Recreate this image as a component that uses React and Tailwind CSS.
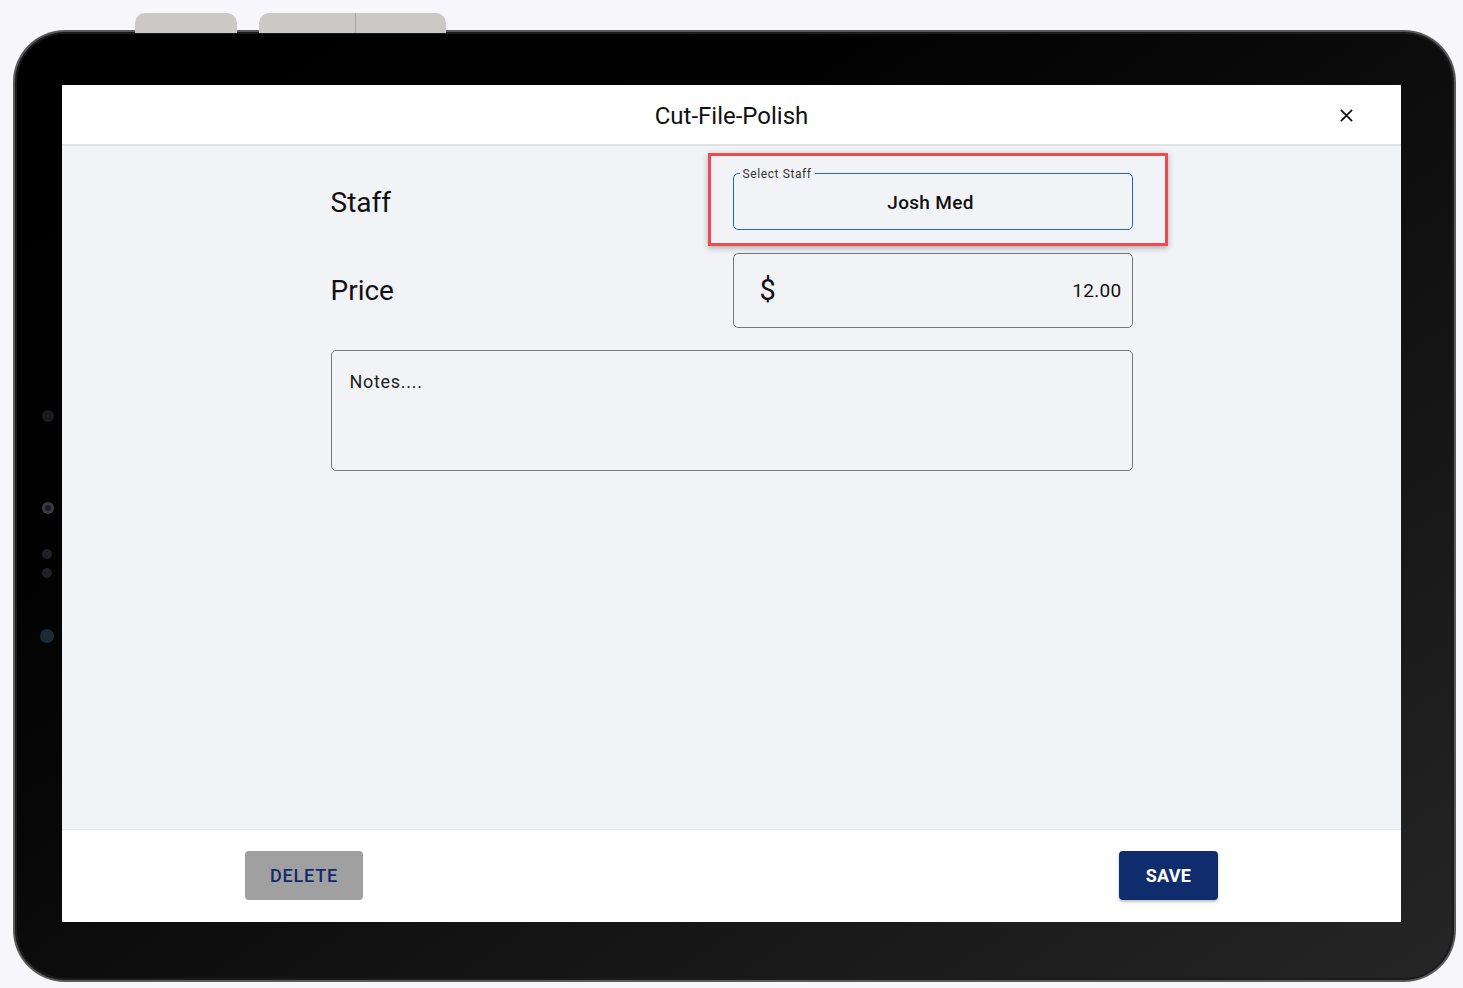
function TabletFrame({ children }) {
  return (
    <div className="relative ml-[13px] mt-[30px] h-[952px] w-[1443px]">
      {/* top hardware buttons */}
      <div className="absolute left-[122px] top-[-17px] h-[20px] w-[102px] rounded-t-[10px] bg-[#cbc9c6]" />
      <div className="absolute left-[246px] top-[-17px] flex h-[20px] w-[187px] overflow-hidden rounded-t-[10px] bg-[#cbc9c6]">
        <div className="h-full w-[97px] border-r border-[#a9a7a4]" />
      </div>
      <div className="h-full w-full rounded-[52px] bg-[#5a5a5a] p-[2px]">
        <div className="h-full w-full rounded-[50px] bg-[#1b1b1b] p-[2px]">
          <div className="relative flex h-full w-full rounded-[48px] bg-gradient-to-br from-[#000000] via-[#0c0c0c] to-[#262626] pb-[56px] pl-[45px] pr-[51px] pt-[51px]">
            {/* side sensors */}
            <div className="absolute left-[25px] top-[376px] h-[12px] w-[12px] rounded-full bg-[#1c1a1f]" />
            <div className="absolute left-[25px] top-[468px] flex h-[12px] w-[12px] items-center justify-center rounded-full bg-[#3b3a40]">
              <div className="h-[6px] w-[6px] rounded-full bg-[#1a1820]" />
            </div>
            <div className="absolute left-[25px] top-[515px] h-[10px] w-[10px] rounded-full bg-[#231f27]" />
            <div className="absolute left-[25px] top-[534px] h-[10px] w-[10px] rounded-full bg-[#231f27]" />
            <div className="absolute left-[23px] top-[595px] h-[14px] w-[14px] rounded-full bg-[#1b2a36]" />
            {children}
          </div>
        </div>
      </div>
    </div>
  );
}

function App() {
  return (
    <div
      className="h-[988px] w-[1463px] overflow-hidden bg-[#f7f7fb] pt-[0.1px]"
      style={{ fontFamily: "Roboto, 'Noto Sans', sans-serif" }}
    >
      <TabletFrame>
        <div className="flex h-full w-full flex-col bg-[#f2f3f7]">
          {/* header */}
          <div className="relative flex h-[61px] items-center justify-center border-b-2 border-[#e1e2e6] bg-white pt-[2px]">
            <span className="text-[24px] text-[#111111]">Cut-File-Polish</span>
            <button className="absolute right-[47px] top-[23px] text-[#111111]">
              <svg width="15" height="15" viewBox="0 0 16 16" fill="none" stroke="currentColor" strokeWidth="1.8">
                <path d="M2 2 L14 14 M14 2 L2 14" />
              </svg>
            </button>
          </div>

          {/* body */}
          <div className="flex flex-1 justify-center pt-[27px]">
            <div className="flex w-[802px] flex-col">
              {/* Staff */}
              <div className="grid grid-cols-2 items-center">
                <span className="pt-[2px] text-[28px] text-[#111111]">Staff</span>
                <div className="relative ml-[1px]">
                  <div className="pointer-events-none absolute -bottom-[16px] -left-[25px] -right-[35px] -top-[20px] border-[3px] border-[#ef4b4f] shadow-[0_2px_6px_rgba(0,0,0,0.3)]" />
                  <div className="relative flex h-[57px] items-center justify-center rounded-[5px] border-[1.5px] border-[#1f62d6]">
                    <span className="absolute -top-[9px] left-[6px] bg-[#f2f3f7] px-[3px] text-[12px] tracking-[0.6px] text-[#333333]">
                      Select Staff
                    </span>
                    <span className="pr-[4px] pt-[3px] text-[19px] font-medium tracking-[0.3px] text-[#111111]">Josh Med</span>
                  </div>
                </div>
              </div>

              {/* Price */}
              <div className="mt-[23px] grid grid-cols-2 items-center">
                <span className="text-[28px] text-[#111111]">Price</span>
                <div className="ml-[1px] flex h-[75px] items-center justify-between rounded-[5px] border-[1.5px] border-[#777777] pl-[26px] pr-[10px]">
                  <span className="text-[29px] text-[#111111]">$</span>
                  <span className="pt-[2px] text-[19px] tracking-[0.3px] text-[#111111]">12.00</span>
                </div>
              </div>

              {/* Notes */}
              <div className="mt-[22px] h-[121px] rounded-[5px] border-[1.5px] border-[#777777] px-[18px] pt-[17px]">
                <span className="text-[18px] tracking-[0.7px] text-[#222222]">Notes....</span>
              </div>
            </div>
          </div>

          {/* footer */}
          <div className="flex h-[93px] items-start justify-between border-t border-[#e5e6ea] bg-white px-[183px] pt-[21px]">
            <button className="flex h-[49px] w-[118px] items-center justify-center rounded-[4px] bg-[#a0a0a0] text-[18px] font-medium tracking-[0.8px] text-[#0f2b6e]">
              DELETE
            </button>
            <button className="flex h-[49px] w-[99px] items-center justify-center rounded-[4px] bg-[#0f2c6d] text-[18px] font-bold tracking-[0.3px] text-white shadow-[0_2px_3px_rgba(0,0,0,0.25)]">
              SAVE
            </button>
          </div>
        </div>
      </TabletFrame>
    </div>
  );
}

export default App;
